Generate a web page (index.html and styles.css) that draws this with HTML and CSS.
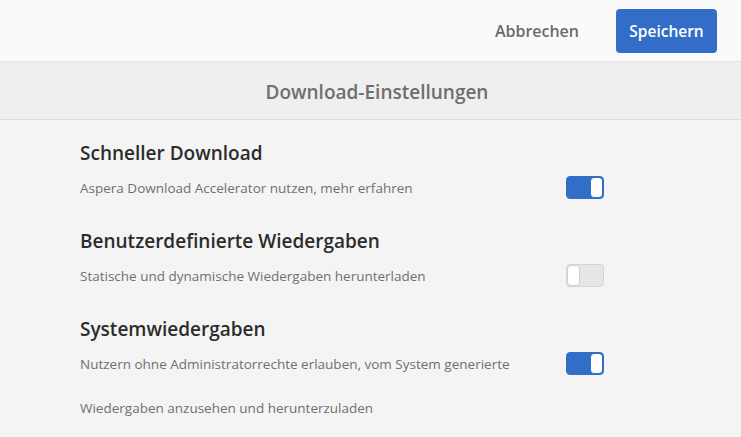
FILE: index.html
```html
<!DOCTYPE html>
<html lang="de">
<head>
<meta charset="utf-8">
<link rel="stylesheet" href="styles.css">
</head>
<body>
<header class="topbar">
  <button class="btn btn-quiet">Abbrechen</button>
  <button class="btn btn-primary">Speichern</button>
</header>
<div class="band">Download-Einstellungen</div>
<main class="content">
  <section class="setting">
    <h2 class="setting-title">Schneller Download</h2>
    <div class="setting-row">
      <p class="setting-desc">Aspera Download Accelerator nutzen, mehr erfahren</p>
      <span class="switch on"><span class="knob"></span></span>
    </div>
  </section>
  <section class="setting">
    <h2 class="setting-title">Benutzerdefinierte Wiedergaben</h2>
    <div class="setting-row">
      <p class="setting-desc">Statische und dynamische Wiedergaben herunterladen</p>
      <span class="switch"><span class="knob"></span></span>
    </div>
  </section>
  <section class="setting">
    <h2 class="setting-title">Systemwiedergaben</h2>
    <div class="setting-row">
      <p class="setting-desc">Nutzern ohne Administratorrechte erlauben, vom System generierte</p>
      <span class="switch on"><span class="knob"></span></span>
    </div>
    <p class="setting-desc extra">Wiedergaben anzusehen und herunterzuladen</p>
  </section>
</main>
</body>
</html>
```

FILE: styles.css
```css
html, body {
  margin: 0;
  padding: 0;
}
body {
  background: #f4f4f4;
  font-family: "Open Sans", "Noto Sans", sans-serif;
  width: 741px;
  height: 437px;
  overflow: hidden;
}
.topbar {
  height: 61px;
  background: #fafafa;
  border-bottom: 1px solid #e3e3e3;
  display: flex;
  align-items: center;
  justify-content: flex-end;
  padding-right: 24px;
}
.btn {
  font-family: inherit;
  font-size: 15.5px;
  font-weight: 600;
  border: none;
  cursor: pointer;
}
.btn-quiet {
  background: transparent;
  color: #6b6b6b;
  padding: 0;
  margin-right: 37px;
  height: 44px;
  font-size: 16px;
}
.btn-primary {
  background: #326ec8;
  color: #fff;
  border-radius: 4px;
  height: 44px;
  width: 101px;
  padding: 0;
  margin-top: 1px;
}
.band {
  height: 58px;
  box-sizing: border-box;
  padding-top: 3px;
  padding-left: 13px;
  background: #efefef;
  border-bottom: 1px solid #dddddd;
  display: flex;
  align-items: center;
  justify-content: center;
  font-size: 19px;
  font-weight: 600;
  color: #6e6e6e;
}
.content {
  padding: 19px 137px 0 80px;
}
.setting {
  margin-bottom: 27px;
}
.setting-title {
  margin: 0;
  font-size: 19px;
  font-weight: 600;
  color: #2c2c2c;
  line-height: 28px;
}
.setting-row {
  display: flex;
  align-items: center;
  justify-content: space-between;
  margin-top: 9px;
}
.setting-desc {
  margin: 0;
  font-size: 13.5px;
  color: #707070;
  line-height: 24px;
}
.extra {
  margin-top: 20px;
}
.switch {
  width: 38px;
  height: 23px;
  box-sizing: border-box;
  border-radius: 4px;
  background: #e6e6e6;
  border: 1px solid #d4d4d4;
  display: flex;
  justify-content: flex-start;
  flex-shrink: 0;
  margin-top: -1px;
}
.switch.on {
  background: #326ec8;
  border-color: #326ec8;
  justify-content: flex-end;
}
.knob {
  width: 13px;
  height: 100%;
  background: #fff;
  border-radius: 4px;
  box-sizing: border-box;
  border: 1px solid #d0d0d0;
}
.switch.on .knob {
  border-color: #326ec8;
}
```
